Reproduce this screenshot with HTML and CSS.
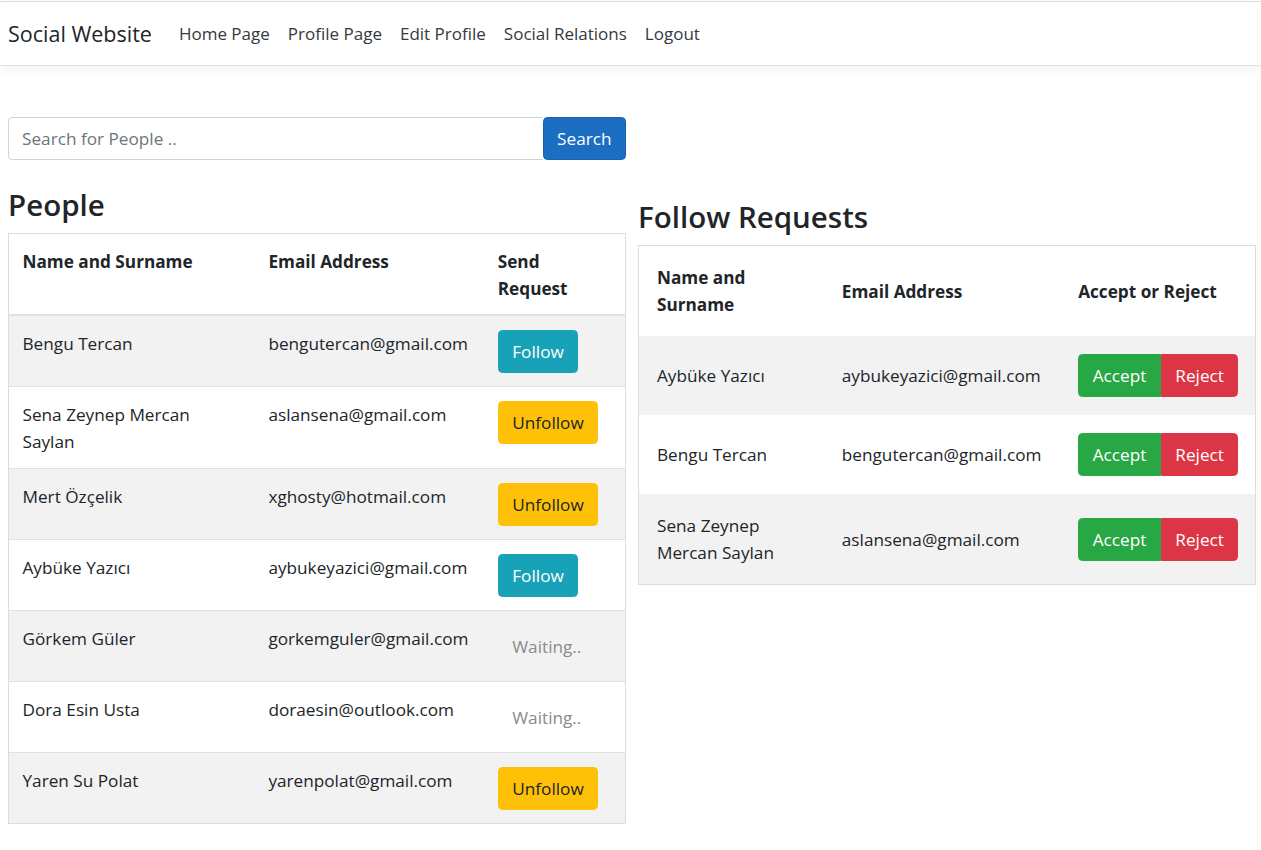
FILE: index.html
```html
<!DOCTYPE html>
<html lang="en">
<head>
<meta charset="utf-8">
<title>Social Website</title>
<link rel="stylesheet" href="styles.css">
</head>
<body>
<nav class="navbar">
  <a class="brand" href="#">Social Website</a>
  <ul class="nav-links">
    <li><a href="#">Home Page</a></li>
    <li><a href="#">Profile Page</a></li>
    <li><a href="#">Edit Profile</a></li>
    <li><a href="#">Social Relations</a></li>
    <li><a href="#">Logout</a></li>
  </ul>
</nav>
<main class="content">
  <section class="col">
    <form class="search">
      <input class="search-input" type="text" placeholder="Search for People ..">
      <button class="btn btn-primary search-btn" type="button">Search</button>
    </form>
    <h2 class="title">People</h2>
    <table class="table people">
      <colgroup><col class="c1"><col class="c2"><col class="c3"></colgroup>
      <thead>
        <tr><th>Name and Surname</th><th>Email Address</th><th>Send Request</th></tr>
      </thead>
      <tbody>
        <tr><td>Bengu Tercan</td><td>bengutercan@gmail.com</td><td><button class="btn btn-info">Follow</button></td></tr>
        <tr><td>Sena Zeynep Mercan Saylan</td><td>aslansena@gmail.com</td><td><button class="btn btn-warning">Unfollow</button></td></tr>
        <tr><td>Mert Özçelik</td><td>xghosty@hotmail.com</td><td><button class="btn btn-warning">Unfollow</button></td></tr>
        <tr><td>Aybüke Yazıcı</td><td>aybukeyazici@gmail.com</td><td><button class="btn btn-info">Follow</button></td></tr>
        <tr><td>Görkem Güler</td><td>gorkemguler@gmail.com</td><td><span class="btn waiting">Waiting..</span></td></tr>
        <tr><td>Dora Esin Usta</td><td>doraesin@outlook.com</td><td><span class="btn waiting">Waiting..</span></td></tr>
        <tr><td>Yaren Su Polat</td><td>yarenpolat@gmail.com</td><td><button class="btn btn-warning">Unfollow</button></td></tr>
      </tbody>
    </table>
  </section>
  <section class="col col-right">
    <h2 class="title">Follow Requests</h2>
    <table class="table requests">
      <colgroup><col class="r1"><col class="r2"><col class="r3"></colgroup>
      <thead>
        <tr><th>Name and Surname</th><th>Email Address</th><th>Accept or Reject</th></tr>
      </thead>
      <tbody>
        <tr><td>Aybüke Yazıcı</td><td>aybukeyazici@gmail.com</td><td><div class="btn-group"><button class="btn btn-success">Accept</button><button class="btn btn-danger">Reject</button></div></td></tr>
        <tr><td>Bengu Tercan</td><td>bengutercan@gmail.com</td><td><div class="btn-group"><button class="btn btn-success">Accept</button><button class="btn btn-danger">Reject</button></div></td></tr>
        <tr><td>Sena Zeynep Mercan Saylan</td><td>aslansena@gmail.com</td><td><div class="btn-group"><button class="btn btn-success">Accept</button><button class="btn btn-danger">Reject</button></div></td></tr>
      </tbody>
    </table>
  </section>
</main>
</body>
</html>
```

FILE: styles.css
```css
* { box-sizing: border-box; }

html, body {
  margin: 0;
  padding: 0;
  background: #fff;
}

body {
  padding-top: 1px;
  font-family: "Segoe UI", "Open Sans", "Noto Sans", sans-serif;
  font-size: 17.2px;
  line-height: 27px;
  color: #212529;
}

.navbar {
  display: flex;
  align-items: center;
  height: 65px;
  padding: 0 8px;
  border-top: 1px solid #dcdcdc;
  border-bottom: 1px solid #e2e2e2;
  box-shadow: 0 4px 13px rgba(0, 0, 0, 0.05);
  background: #fff;
}

.brand {
  font-size: 21.5px;
  color: #212529;
  text-decoration: none;
  margin-right: 18px;
  line-height: 30px;
}

.nav-links {
  display: flex;
  list-style: none;
  margin: 0;
  padding: 0;
}

.nav-links a {
  display: block;
  padding: 8px 9px;
  font-size: 17px;
  color: #343a40;
  text-decoration: none;
}

.content {
  display: grid;
  grid-template-columns: 618px 618px;
  column-gap: 12px;
  align-items: start;
  padding: 0 8px;
  margin-top: 51px;
}

.search {
  display: flex;
  margin: 0 0 26px;
}

.search-input {
  flex: 1;
  height: 43px;
  padding: 6px 13px;
  font: inherit;
  color: #495057;
  border: 1px solid #ced4da;
  border-right: 0;
  border-radius: 4.5px 0 0 4.5px;
  outline: none;
}

.search-input::placeholder {
  color: #6c757d;
}

.search-btn {
  border-radius: 0 4.5px 4.5px 0;
  height: 43px;
  padding-top: 6px;
  padding-bottom: 6px;
}

.title {
  margin: 0 0 9px;
  font-size: 29.5px;
  font-weight: 600;
  line-height: 38px;
  color: #212529;
}

.col-right .title {
  margin-top: 81px;
}

.table {
  width: 618px;
  table-layout: fixed;
  border-collapse: collapse;
  border: 1px solid #dcdcdc;
}

.table th {
  text-align: left;
  font-weight: 700;
}

.people th,
.people td {
  padding: 13.5px;
  vertical-align: top;
  border-top: 1px solid #dee2e6;
}

.people thead th {
  padding-bottom: 12.5px;
  border-bottom: 2px solid #dee2e6;
  border-top: 0;
}

.people tbody tr:nth-child(odd) {
  background: #f2f2f2;
}

.people .c1 { width: 246px; }
.people .c2 { width: 229px; }
.people .c3 { width: 141px; }

.requests th,
.requests td {
  padding: 18px;
  vertical-align: middle;
}

.requests tbody tr:nth-child(odd) {
  background: #f2f2f2;
}

.requests .r1 { width: 185px; }
.requests .r2 { width: 236px; }
.requests .r3 { width: 195px; }

.btn {
  display: inline-block;
  font: inherit;
  line-height: 27px;
  padding: 7px 13.5px;
  border: 1px solid transparent;
  border-radius: 4.5px;
  cursor: pointer;
  vertical-align: middle;
}

.btn-primary { background: #1b6ec2; border-color: #1861ac; color: #fff; }
.btn-info { background: #17a2b8; border-color: #17a2b8; color: #fff; }
.btn-warning { background: #ffc107; border-color: #ffc107; color: #212529; }
.btn-success { background: #28a745; border-color: #28a745; color: #fff; }
.btn-danger { background: #dc3545; border-color: #dc3545; color: #fff; }

.waiting {
  color: #8a8a8a;
  background: transparent;
  cursor: default;
}

.btn-group {
  display: inline-flex;
}

.btn-group .btn:first-child {
  border-radius: 4.5px 0 0 4.5px;
}

.btn-group .btn:last-child {
  border-radius: 0 4.5px 4.5px 0;
}
```
